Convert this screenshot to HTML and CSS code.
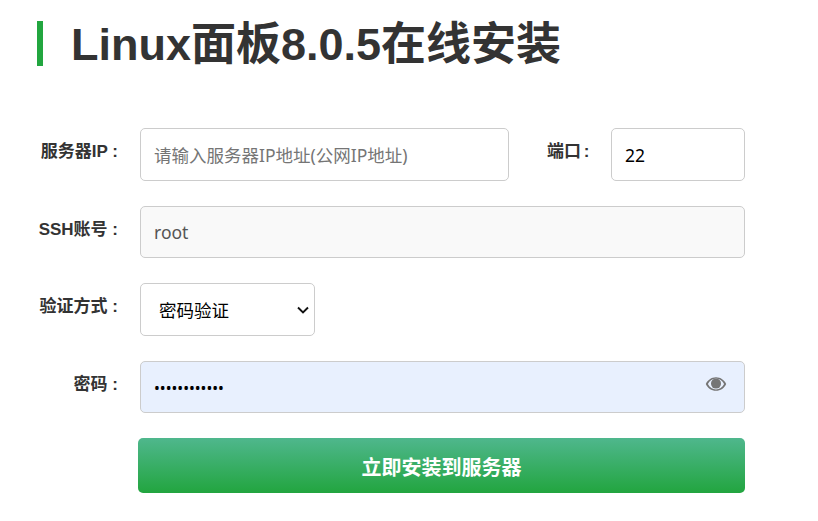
FILE: index.html
```html
<!DOCTYPE html>
<html lang="zh-CN">
<head>
<meta charset="utf-8">
<title>Linux面板8.0.5在线安装</title>
<link rel="stylesheet" href="styles.css">
</head>
<body>
<main class="page">
  <h1 class="title">Linux面板8.0.5在线安装</h1>
  <form class="form">
    <div class="row row-first">
      <label class="label" for="ip">服务器IP :</label>
      <input class="field field-ip" id="ip" type="text" placeholder="请输入服务器IP地址(公网IP地址)">
      <label class="label label-port" for="port">端口 :</label>
      <input class="field field-port" id="port" type="text" value="22">
    </div>
    <div class="row row-account">
      <label class="label" for="user">SSH账号 :</label>
      <input class="field field-wide field-muted" id="user" type="text" value="root">
    </div>
    <div class="row row-select">
      <label class="label" for="auth">验证方式 :</label>
      <select class="field field-select" id="auth">
        <option>密码验证</option>
      </select>
    </div>
    <div class="row row-password">
      <label class="label" for="pwd">密码 :</label>
      <div class="password">
        <input class="field field-wide field-filled" id="pwd" type="password" value="aaaaaaaaaaaa">
        <svg class="eye" viewBox="0 0 22 16" aria-hidden="true">
          <path d="M11 1.2C6.4 1.2 2.6 4 .8 8c1.8 4 5.6 6.8 10.2 6.8S19.400 12 21.200 8C19.400 4 15.600 1.200 11 1.200Zm0 12.200C7.600 13.400 4.500 11.300 2.900 8 4.500 4.700 7.600 2.600 11 2.600s6.500 2.100 8.100 5.400c-1.600 3.300-4.700 5.400-8.100 5.400Z"/>
          <circle cx="11" cy="7.600" r="5"/>
        </svg>
      </div>
    </div>
    <button class="submit" type="button">立即安装到服务器</button>
  </form>
</main>
</body>
</html>
```
FILE: styles.css
```css
* { box-sizing: border-box; }
html, body { margin: 0; padding: 0; background: #fff; }
body {
  font-family: "Liberation Sans", "Noto Sans CJK SC", sans-serif;
  color: #333;
}
.page { width: 818px; height: 521px; overflow: hidden; padding: 21px 0 0 37px; }
.title {
  margin: 0;
  height: 45px;
  line-height: 47px;
  font-size: 45px;
  font-weight: 700;
  color: #333;
  border-left: 6px solid #22a63f;
  padding-left: 28px;
  white-space: nowrap;
}
.form { margin-top: 62px; width: 708px; }
.row { display: flex; align-items: flex-start; }
.row-account { margin-top: 25px; }
.row-select { margin-top: 25px; }
.row-password { margin-top: 25px; }
.label {
  width: 81px;
  flex: none;
  margin-right: 22px;
  padding-top: 14px;
  text-align: right;
  font-size: 17px;
  line-height: 20px;
  font-weight: 700;
  color: #333;
  white-space: nowrap;
}
.label-port { width: 42px; margin-left: 38px; word-spacing: -2px; }
.field {
  display: block;
  height: 52px;
  border: 1px solid #ccc;
  border-radius: 5px;
  background: #fff;
  padding: 1px 13px 0;
  font-family: "Noto Sans", "Noto Sans CJK SC", sans-serif;
  font-size: 17.5px;
  color: #000;
  outline: none;
}
.field::placeholder { color: #757575; opacity: 1; }
.field-ip { width: 369px; height: 53px; }
.field-port { width: 134px; height: 53px; }
.field-wide { width: 605px; }
.field-muted { background: #f9f9f9; color: #555; padding-top: 0; }
.field-select {
  width: 175px;
  height: 53px;
  padding: 1px 14px 0 18px;
  appearance: none;
  background: #fff url("data:image/svg+xml,%3Csvg xmlns='http://www.w3.org/2000/svg' viewBox='0 0 12 8'%3E%3Cpath d='M1 1.500 6 6.500 11 1.500' fill='none' stroke='%23111' stroke-width='1.900'/%3E%3C/svg%3E") no-repeat right 5px center / 12px 8px;
}
.field-filled { background: #e8f0fe; font-size: 15.5px; padding-top: 2px; }
.password { position: relative; width: 605px; }
.eye {
  position: absolute;
  right: 18px;
  top: 15px;
  width: 22px;
  height: 16px;
  fill: #757575;
}
.submit {
  display: block;
  width: 607px;
  height: 55px;
  margin: 25px 0 0 101px;
  padding: 2px 0 0;
  border: 0;
  border-radius: 5px;
  background: linear-gradient(180deg, #4fb78d 0%, #22a53f 100%);
  color: #fff;
  font-family: "Liberation Sans", "Noto Sans CJK SC", sans-serif;
  font-size: 20px;
  font-weight: 700;
}
```
